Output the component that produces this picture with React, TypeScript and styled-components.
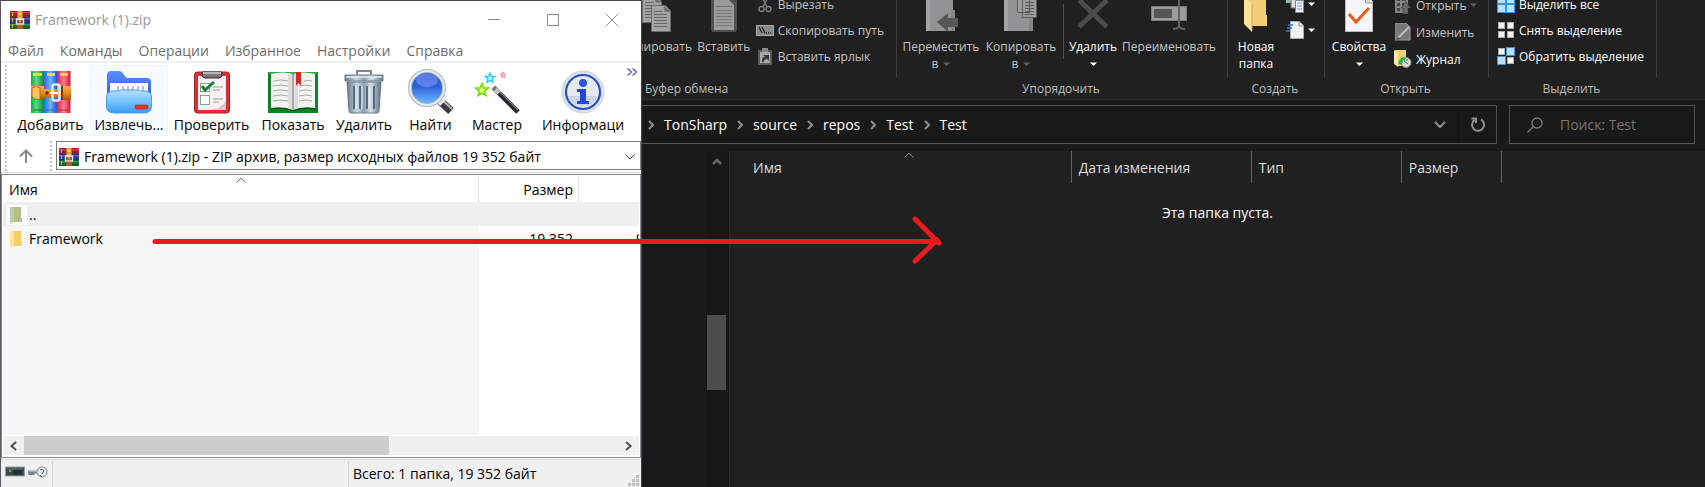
import React from "react";
import styled, { createGlobalStyle } from "styled-components";

const GlobalStyle = createGlobalStyle`
  * { box-sizing: border-box; }
  body { margin: 0; background: #191919; }
  button, input, select { font: inherit; color: inherit; }
  button { background: none; border: 0; padding: 0; cursor: default; }
  a { color: inherit; text-decoration: none; }
  svg { display: block; flex: none; }
`;

const Desktop = styled.div`
  position: relative;
  display: grid;
  grid-template-columns: minmax(0, 642fr) minmax(0, 1063fr);
  min-height: 100vh;
  overflow: hidden;
  font-family: "Open Sans", "Noto Sans", sans-serif;
  font-size: 14px;
  line-height: 20px;
  white-space: nowrap;
`;

/* ---------- Archiver window ---------- */

const Archiver = styled.main`
  display: flex;
  flex-direction: column;
  min-width: 0;
  background: #fff;
  color: #000;
  border-top: 1px solid #4b4654;
  border-left: 1px solid #5c5864;
  border-right: 1px solid #45464a;
`;
const TitleBar = styled.header`
  display: flex;
  align-items: center;
  height: 37px;
  padding-left: 9px;
  gap: 5px;
  color: #999;
`;
const Title = styled.h1`
  flex: 1;
  margin: 0;
  font-size: 14px;
  font-weight: 400;
`;
const CaptionButtons = styled.div`
  display: flex;
`;
const CaptionButton = styled.button`
  width: 59px;
  height: 36px;
  display: grid;
  place-items: center;
`;
const MenuBar = styled.nav`
  display: flex;
  height: 25px;
  padding: 3px 7px 0;
  gap: 16px;
  color: #6d6d6d;
  border-bottom: 2px solid #f0f0f0;
`;
const Toolbar = styled.div`
  position: relative;
  display: flex;
  height: 76px;
  padding: 2px 1px 0 4px;
  overflow: hidden;
`;
const Grip = styled.span`
  flex: none;
  width: 2px;
  margin-right: 4px;
  background: repeating-linear-gradient(#c3c3c3 0 2px, transparent 2px 4px);
`;
const ToolButton = styled.button<{ $width: number; $hot?: boolean }>`
  flex: 0 1 ${(p) => p.$width}px;
  height: 71px;
  display: flex;
  flex-direction: column;
  align-items: center;
  padding-top: 4px;
  gap: 1px;
  overflow: hidden;
  background: ${(p) => (p.$hot ? "#f7fbff" : "transparent")};
  box-shadow: ${(p) => (p.$hot ? "inset 0 0 0 1px #eef6fd" : "none")};
`;
const ToolIcon = styled.span`
  height: 45px;
  display: flex;
  align-items: flex-end;
`;
const MoreButton = styled.button`
  position: absolute;
  top: 2px;
  right: 1px;
  padding: 3px;
`;
const AddressRow = styled.div`
  display: flex;
  height: 34px;
  padding: 2px 0 1px 4px;
  border-bottom: 1px solid #d9d9d9;
`;
const UpButton = styled.button`
  width: 39px;
  display: grid;
  place-items: center;
  padding-right: 10px;
`;
const AddressBox = styled.label`
  flex: 1;
  min-width: 0;
  height: 29px;
  display: flex;
  align-items: center;
  padding: 2px 5px 0 2px;
  gap: 5px;
  border: 1px solid #7a7a7a;
`;
const AddressSelect = styled.select`
  flex: 1;
  min-width: 0;
  appearance: none;
  border: 0;
  padding: 0;
  background: transparent;
  outline: 0;
`;
const ListFrame = styled.section`
  flex: 1;
  display: flex;
  flex-direction: column;
  margin-top: 1px;
  padding: 0 1px 2px 1px;
  border: 1px solid #828790;
`;
const FileTable = styled.table`
  flex: 1;
  width: 100%;
  display: flex;
  flex-direction: column;
  thead, tbody { display: flex; flex-direction: column; }
  tbody { flex: 1; }
`;
const FileRow = styled.tr<{ $focused?: boolean; $fill?: boolean }>`
  display: grid;
  grid-template-columns: minmax(0, 1fr) 100px 60px;
  height: ${(p) => (p.$fill ? "auto" : "24px")};
  flex: ${(p) => (p.$fill ? 1 : "none")};
  background: ${(p) => (p.$focused ? "#efefef" : "transparent")};
  td:first-child { background: ${(p) => (p.$focused ? "transparent" : "#f7f7f7")}; }
`;
const HeaderRow = styled.tr`
  display: grid;
  grid-template-columns: minmax(0, 1fr) 100px 60px;
  height: 27px;
`;
const HeaderCell = styled.th<{ $right?: boolean; $open?: boolean }>`
  position: relative;
  margin-top: 1px;
  padding: 4px 5px 0 6px;
  font-weight: 400;
  text-align: ${(p) => (p.$right ? "right" : "left")};
  border-right: ${(p) => (p.$open ? "0" : "1px solid #e2e2e2")};
`;
const SortMark = styled.span<{ $shift?: boolean }>`
  position: absolute;
  top: 1px;
  left: 50%;
  margin-left: ${(p) => (p.$shift ? "-5px" : "4px")};
`;
const NameCell = styled.td`
  display: flex;
  align-items: center;
  padding: 1px 0 0;
`;
const FolderSlot = styled.span<{ $plain?: boolean }>`
  height: 20px;
  width: 20px;
  margin: 0 2px 0 4px;
  padding-left: 2px;
  background: ${(p) => (p.$plain ? "#fff" : "transparent")};
`;
const SizeCell = styled.td<{ $cut?: boolean }>`
  overflow: hidden;
  padding: ${(p) => (p.$cut ? "3px 0 0 57px" : "3px 6px 0 0")};
  text-align: ${(p) => (p.$cut ? "left" : "right")};
`;
const HScroll = styled.div`
  display: flex;
  height: 19px;
  margin-top: 1px;
  background: #f0f0f0;
`;
const HScrollButton = styled.button`
  width: 21px;
  display: grid;
  place-items: center;
`;
const HScrollTrack = styled.div`
  flex: 1;
  &::before {
    content: "";
    display: block;
    width: 61.5%;
    height: 100%;
    background: #cdcdcd;
  }
`;
const StatusBar = styled.footer`
  display: flex;
  height: 28px;
  margin-top: 1px;
  background: #f0f0f0;
  border-top: 1px solid #d7d7d7;
`;
const StatusPart = styled.div<{ $grow: number; $last?: boolean }>`
  flex: ${(p) => (p.$grow ? `${p.$grow} 1 0` : "none")};
  display: flex;
  align-items: center;
  justify-content: space-between;
  gap: 3px;
  margin-top: 1px;
  padding-left: 4px;
  padding-right: ${(p) => (p.$last ? "2px" : "4px")};
  border-right: ${(p) => (p.$last ? "0" : "1px solid #d4d4d4")};
`;
const StatusIcons = styled.span`
  display: flex;
  align-items: center;
  gap: 3px;
  padding-bottom: 5px;
`;
const ResizeGrip = styled.span`
  align-self: flex-end;
`;

/* ---------- Explorer window ---------- */

const Explorer = styled.section`
  display: flex;
  flex-direction: column;
  min-width: 0;
  overflow: hidden;
  background: #191919;
  color: #fff;
`;
const Ribbon = styled.div`
  display: flex;
  height: 100px;
  background: #202020;
  border-bottom: 1px solid #2b2b2b;
  font-size: 12px;
  line-height: 17px;
`;
const Group = styled.section<{ $width: number }>`
  flex: 0 1 ${(p) => p.$width}px;
  display: flex;
  flex-direction: column;
  overflow: hidden;
`;
const GroupBody = styled.div<{ $end?: boolean }>`
  height: 78px;
  display: flex;
  align-items: flex-end;
  justify-content: ${(p) => (p.$end ? "flex-end" : "flex-start")};
  padding-right: ${(p) => (p.$end ? "12px" : "0")};
  overflow: hidden;
  border-right: 1px solid #3d3d3d;
`;
const GroupLabel = styled.h2<{ $start?: boolean }>`
  margin: 0;
  padding: 2px 6px 0 3px;
  font-size: 12px;
  font-weight: 400;
  color: #bdbdbd;
  text-align: ${(p) => (p.$start ? "left" : "center")};
`;
const BigButton = styled.button<{ $width: number; $dim?: boolean }>`
  flex: none;
  width: ${(p) => p.$width}px;
  height: 86px;
  display: flex;
  flex-direction: column;
  align-items: center;
  color: ${(p) => (p.$dim ? "#c4c4c4" : "#fff")};
`;
const BigIcon = styled.span`
  height: 46px;
  display: flex;
  align-items: flex-end;
  padding-bottom: 6px;
`;
const SecondLine = styled.span`
  min-height: 17px;
  display: flex;
  align-items: center;
  gap: 5px;
`;
const SmallStack = styled.div<{ $pad: number; $loose?: boolean }>`
  flex: none;
  display: flex;
  flex-direction: column;
  gap: ${(p) => (p.$loose ? 7 : 6)}px;
  padding: 0 0 ${(p) => (p.$loose ? 9 : 12)}px ${(p) => p.$pad}px;
`;
const SmallButton = styled.button<{ $dim?: boolean }>`
  height: 20px;
  display: flex;
  align-items: center;
  gap: 4px;
  color: ${(p) => (p.$dim ? "#c4c4c4" : "#fff")};
`;
const SmallIcon = styled.span`
  width: 18px;
  display: grid;
  place-items: center;
`;
const StackGap = styled.span`
  height: 20px;
`;
const InnerRule = styled.span`
  width: 1px;
  height: 55px;
  margin: 0 4px 19px 6px;
  background: #505050;
`;
const NavRow = styled.div`
  display: flex;
  gap: 12px;
  height: 51px;
  padding: 5px 10px 7px 0;
`;
const PathBox = styled.nav`
  flex: 1;
  min-width: 0;
  display: flex;
  align-items: center;
  height: 39px;
  padding-left: 6px;
  border: 1px solid #535353;
  border-left: 0;
`;
const Crumb = styled.a`
  padding: 0 10px;
`;
const PathButton = styled.button<{ $rule?: boolean }>`
  width: 38px;
  height: 37px;
  display: grid;
  place-items: center;
  border-left: 1px solid ${(p) => (p.$rule ? "#141414" : "transparent")};
`;
const Spacer = styled.span`
  flex: 1;
`;
const SearchBox = styled.label`
  width: 186px;
  height: 39px;
  display: flex;
  align-items: center;
  gap: 17px;
  padding-left: 17px;
  border: 1px solid #535353;
`;
const SearchInput = styled.input`
  flex: 1;
  min-width: 0;
  padding: 0;
  border: 0;
  outline: 0;
  background: transparent;
  &::placeholder { color: #757575; opacity: 1; }
`;
const Content = styled.div`
  flex: 1;
  display: flex;
`;
const TreePane = styled.aside`
  width: 88px;
  display: flex;
  justify-content: flex-end;
  border-right: 1px solid #2b2b2b;
`;
const VScroll = styled.div`
  width: 23px;
  padding: 0 3px 0 1px;
  background: #171717;
  display: grid;
  grid-template-rows: 164fr 75fr 97fr;
`;
const VScrollButton = styled.button`
  display: grid;
  justify-items: center;
  align-content: start;
  padding-top: 7px;
`;
const VThumb = styled.span`
  background: #4d4d4d;
`;
const FolderView = styled.section`
  flex: 1;
  min-width: 0;
  background: #202020;
  color: #dedede;
`;
const Columns = styled.table`
  width: 100%;
  table-layout: fixed;
  border-collapse: collapse;
`;
const Column = styled.th<{ $width?: string; $first?: boolean; $open?: boolean }>`
  position: relative;
  width: ${(p) => p.$width ?? "auto"};
  height: 32px;
  padding: 2px 0 0 ${(p) => (p.$first ? "23px" : "7px")};
  text-align: left;
  font-weight: 400;
  border-right: ${(p) => (p.$open ? "0" : "1px solid #636363")};
`;
const EmptyNote = styled.p`
  margin: 20px 0 0;
  text-align: center;
  color: #fff;
`;

const ArrowOverlay = styled.svg`
  position: absolute;
  left: 0;
  top: 0;
  pointer-events: none;
`;

/* ---------- Drawings ---------- */

const Chevron = ({ d, w, h, color, stroke = 1 }: { d: string; w: number; h: number; color: string; stroke?: number }) => (
  <svg width={w} height={h} viewBox={`0 0 ${w} ${h}`} fill="none" stroke={color} strokeWidth={stroke}>
    <path d={d} />
  </svg>
);
const Up = ({ color }: { color: string }) => <Chevron d="M.7 5.5 5 1.2 9.3 5.5" w={10} h={7} color={color} />;
const Drop = ({ color }: { color: string }) => (
  <svg width="7" height="4" viewBox="0 0 7 4"><path d="M0 .5h7L3.5 4z" fill={color} /></svg>
);

const RarLogo = () => (
  <svg width="20" height="18" viewBox="0 0 20 18">
    <rect width="20" height="6" fill="#9c1838" /><rect y="1" width="20" height="1.4" fill="#d23a55" />
    <rect y="6" width="20" height="6" fill="#26348f" /><rect y="7" width="20" height="1.4" fill="#5368ce" />
    <rect y="12" width="20" height="6" fill="#17602c" /><rect y="13" width="20" height="1.4" fill="#33a04c" />
    <path d="M2.5 1v4M2.5 7v4M2.5 13v4" stroke="#e6c12a" />
    <path d="M7 0h6v18H7z" fill="#8a4a17" /><path d="M7.5 0h5v9h-5z" fill="#e8a12e" />
    <path d="M8.5 2a2 2 0 0 1 3 0v2h-3z" fill="#ffd75c" />
    <rect x="6.5" y="8" width="7" height="5" fill="none" stroke="#e8e8e8" strokeWidth="1.4" />
    <path d="M10 6.500v5" stroke="#fff" /><path d="M7 14h6v4H7z" fill="#b0601f" />
  </svg>
);

const AddIcon = () => (
  <svg width="42" height="44" viewBox="0 0 42 44">
    <defs>
      <linearGradient id="bg"><stop stopColor="#1ba545" /><stop offset=".4" stopColor="#58dd80" /><stop offset="1" stopColor="#108a34" /></linearGradient>
      <linearGradient id="bb"><stop stopColor="#1d6fe0" /><stop offset=".5" stopColor="#70b4ff" /><stop offset="1" stopColor="#1d58d8" /></linearGradient>
      <linearGradient id="br"><stop stopColor="#e5203c" /><stop offset=".5" stopColor="#ff7d92" /><stop offset="1" stopColor="#d41432" /></linearGradient>
      <linearGradient id="belt" x2="0" y2="1"><stop stopColor="#f7b04b" /><stop offset=".5" stopColor="#e88a1c" /><stop offset="1" stopColor="#a9540d" /></linearGradient>
    </defs>
    <path d="M1 1h13v42H1z" fill="url(#bg)" /><path d="M14 1h13v42H14z" fill="url(#bb)" /><path d="M27 1h13.500v42H27z" fill="url(#br)" />
    <path d="M3 4.500h9M17 4.500h8M30 4.500h8" stroke="#ffe03a" strokeWidth="2.500" />
    <path d="M3 40h9M16 40h9M29 40h9" stroke="#0003" strokeWidth="2" />
    <path d="M1 16h13v14H5q-4-2-4-7zM14 19h13v9H14zM27 16h14v14H27z" fill="url(#belt)" />
    <path d="M2 18q5-3 8 0v11q-5 2-8-2z" fill="#ffc35b" stroke="#b86a12" />
    <path d="M31 16h2v14h-2z" fill="#7d3b08" />
    <rect x="22.500" y="14.500" width="7" height="16" rx="2" fill="none" stroke="#e9e9ee" strokeWidth="2.500" />
    <path d="M20 23h8" stroke="#fff" strokeWidth="2" /><circle cx="17" cy="23" r="1.700" fill="#70360a" />
  </svg>
);
const ExtractIcon = () => (
  <svg width="46" height="44" viewBox="0 0 46 44">
    <defs>
      <linearGradient id="fb" x2="0" y2="1"><stop stopColor="#5a8dff" /><stop offset="1" stopColor="#2952dd" /></linearGradient>
      <linearGradient id="ff" x2="0" y2="1"><stop stopColor="#b4e0ff" /><stop offset=".5" stopColor="#77c2fc" /><stop offset="1" stopColor="#3c9bf4" /></linearGradient>
    </defs>
    <path d="M1 5q0-4 4-4h8q3 0 5 4l3 3h20q4 0 4 4v22H1z" fill="url(#fb)" />
    <path d="M4 13h38v15H4z" fill="#f8fafc" />
    <path d="M12 16v5M17 16v5M22 16v5M27 16v5M32 16v5M37 16v5" stroke="#b9c2cd" strokeWidth="2" />
    <path d="M.500 27q0-5 6-6h5q2 0 3-1h17q2 0 3 1h5q6 1 6 6v9q0 7-7 7h-31q-7 0-7-7z" fill="url(#ff)" stroke="#4d9dea" />
    <rect x="29" y="35" width="13" height="4" rx="1" fill="#e8321c" stroke="#ba2010" strokeWidth=".6" />
  </svg>
);
const TestIcon = () => (
  <svg width="36" height="44" viewBox="0 0 36 44">
    <rect x=".500" y="2" width="35" height="41" rx="3" fill="#d93136" stroke="#b01d22" />
    <path d="M4 6h28v26q-5 7-14 8H4z" fill="#f3f3f3" /><path d="M32 32q-3 6-14 8h14z" fill="#cfcfcf" />
    <path d="M8 2h20v4q-1 2-3 2H11q-2 0-3-2z" fill="#777" stroke="#4a2224" /><path d="M9 3h18" stroke="#d5d5d5" strokeWidth="1.500" />
    <rect x="6.500" y="13.500" width="9" height="8" fill="#fff" stroke="#999" /><rect x="6.500" y="25.500" width="9" height="9" fill="#fff" stroke="#999" />
    <path d="M8 16l3 4 9-8" fill="none" stroke="#168436" strokeWidth="3" />
    <path d="M19 17h10M19 20h7M19 29h10M19 32h6" stroke="#9c9c9c" />
  </svg>
);
const ViewIcon = () => (
  <svg width="50" height="44" viewBox="0 0 50 44">
    <path d="M0 2h50v41H0z" fill="#118126" /><path d="M1 3h48" stroke="#35a94a" strokeWidth="2" />
    <path d="M3 4q12-3 22 0 10-3 22 0v34q-13-2-22 2-9-4-22-2z" fill="#f3f3f0" />
    <path d="M24 4h2v36h-2z" fill="#aaa" /><path d="M20 4h4v35l-4-1zM26 4h4v34l-4 1z" fill="#dcdcda" />
    <path d="M5 11q8-2 15 0M5 16q8-2 15 0M5 21q8-2 15 0M5 26q8-2 15 0M5 31q8-2 15 0M31 16q7-2 13 0M31 21q7-2 13 0M31 26q7-2 13 0M31 31q7-2 13 0M36 11q4-1 8 0" fill="none" stroke="#a9a9a9" />
    <path d="M28 2h5v14l-2.500-3-2.500 3z" fill="#cf2c2c" /><path d="M3 39q13-2 22 2 9-4 22-2" stroke="#0b4915" fill="none" />
  </svg>
);
const TrashIcon = () => (
  <svg width="40" height="45" viewBox="0 0 40 45">
    <defs><linearGradient id="tr"><stop stopColor="#687988" /><stop offset=".3" stopColor="#cdd9e4" /><stop offset=".5" stopColor="#8b9cad" /><stop offset=".7" stopColor="#d5e0ea" /><stop offset="1" stopColor="#5d6e7f" /></linearGradient></defs>
    <path d="M13 6V2h14v4" fill="none" stroke="#7b8a99" strokeWidth="2" />
    <path d="M3 13h34l-2 29q0 2-3 2H8q-3 0-3-2z" fill="url(#tr)" stroke="#6a7a8a" />
    <path d="M10 17v23M16 17v23M23 17v23M30 17v23" stroke="#566b80" strokeWidth="2" /><path d="M12 17v23M18 17v23M25 17v23" stroke="#eaf1f6" />
    <path d="M1 6h38v6H1z" fill="url(#tr)" stroke="#71808f" /><path d="M2 8h36" stroke="#e5edf3" strokeWidth="1.500" />
  </svg>
);
const FindIcon = () => (
  <svg width="46" height="45" viewBox="0 0 46 45">
    <defs><linearGradient id="gl" x2="0" y2="1"><stop stopColor="#2749c9" /><stop offset=".45" stopColor="#3060dc" /><stop offset="1" stopColor="#6fc0ff" /></linearGradient></defs>
    <path d="M31 31l12 11" stroke="#3b3b44" strokeWidth="8" /><path d="M32 29l12 11" stroke="#b7b7c0" strokeWidth="2" /><path d="M30 29l5 5" stroke="#ededf0" strokeWidth="8" />
    <circle cx="19" cy="19" r="17" fill="url(#gl)" stroke="#a9b4c2" strokeWidth="4" /><circle cx="19" cy="19" r="17" fill="none" stroke="#e5ebf0" strokeWidth="2" />
    <ellipse cx="19" cy="11" rx="11" ry="7" fill="#9fbcff" opacity=".4" />
  </svg>
);
const starPath = "M0-7 2-2.300 7-2.200 3 1.200 4.300 6 0 3.500-4.300 6-3 1.200-7-2.200-2-2.300z";
const WizardIcon = () => (
  <svg width="46" height="44" viewBox="0 0 46 44">
    <path d={starPath} transform="translate(16 8) scale(.7)" fill="#b9f7ff" stroke="#2cc9ee" strokeWidth="2" />
    <path d={starPath} transform="translate(29 5) scale(.45)" fill="#ffc4c4" stroke="#f08d92" strokeWidth="2" />
    <path d={starPath} transform="translate(8 20) scale(.9)" fill="#e5ff90" stroke="#7ade12" strokeWidth="2" />
    <path d="M20 18l24 24" stroke="#27272b" strokeWidth="5" /><path d="M21 17l23 23" stroke="#76767c" strokeWidth="1.500" />
    <path d="M19 17l6 6" stroke="#c3c3c5" strokeWidth="5" /><path d="M19.500 17.500l2 2" stroke="#777" strokeWidth="5" />
  </svg>
);
const InfoIcon = () => (
  <svg width="44" height="44" viewBox="0 0 44 44">
    <circle cx="22" cy="22" r="21" fill="#dce1e7" stroke="#ccd1d8" /><circle cx="22" cy="22" r="17" fill="#e6eaf0" stroke="#2952c7" strokeWidth="2.200" />
    <path d="M7 26a16 16 0 0 0 30 0z" fill="#cad3df" />
    <circle cx="22" cy="13" r="4" fill="#2c59da" /><path d="M16 19h9v12h3v3H16v-3h3v-9h-3z" fill="#2449d2" />
  </svg>
);
const FolderMark = ({ muted }: { muted?: boolean }) => (
  <svg width="14" height="19" viewBox="0 0 14 19">
    <path d="M4 2h8v11h1v4H4z" fill={muted ? "#b4bf87" : "#f6cd68"} />
    <path d="M1 2h3l1 2v12l-2 3-2-2z" fill={muted ? "#bccbb0" : "#fde59b"} />
  </svg>
);
const DriveIcon = () => (
  <svg width="20" height="11" viewBox="0 0 20 11">
    <rect x=".500" y="1" width="19" height="9" fill="#3c464a" stroke="#8ea3ad" /><path d="M2 3h16" stroke="#65747a" />
    <circle cx="5" cy="5" r="1.300" fill="#55b81e" /><path d="M8 4h9v5H8z" fill="#293235" />
  </svg>
);
const KeyIcon = () => (
  <svg width="20" height="12" viewBox="0 0 20 12">
    <path d="M0 6h11M2 7v2M5 7v2" stroke="#7d8589" strokeWidth="3" /><path d="M1 5h10" stroke="#ccd3d6" />
    <circle cx="14" cy="6" r="5" fill="#eceff0" stroke="#9caab0" strokeWidth="1.500" /><path d="M12 4q3-2 4 1l-2 3M12 9l2 2" stroke="#465a66" fill="none" />
  </svg>
);
const Page = ({ x, y }: { x: number; y: number }) => (
  <g transform={`translate(${x} ${y})`}>
    <path d="M.500.500h14l5 5v21H.500z" fill="#a3a3a3" stroke="#6b6b6b" /><path d="M14 1v5h5" fill="#777" stroke="#5f5f5f" />
    <path d="M3 6.500h9M3 9.500h13M3 12.500h13M3 15.500h13M3 18.500h13M3 21.500h13" stroke="#666" />
  </g>
);
const CopyPages = () => <svg width="30" height="40" viewBox="0 0 30 40"><Page x={0} y={4} /><Page x={9} y={13} /></svg>;
const PasteBoard = () => (
  <svg width="26" height="40" viewBox="0 0 26 40"><rect y="4" width="26" height="36" rx="2" fill="#4f4f4f" /><path d="M3 8h15l5 5v25H3z" fill="#9b9b9b" />
    <path d="M5 14.500h16M5 18.500h16M5 21.500h16M5 24.500h16M5 27.500h16M5 30.500h16M5 33.500h16" stroke="#777" /></svg>
);
const MoveIcon = () => (
  <svg width="34" height="40" viewBox="0 0 34 40"><path d="M2 0h27v39H2z" fill="#939395" /><path d="M2 0h4v39H2z" fill="#a3a3a4" /><path d="M27 18h4v21h-4z" fill="#858587" />
    <path d="M13 30l11-9v5h10v9H24v5z" fill="#575757" /></svg>
);
const CopyToIcon = () => (
  <svg width="34" height="40" viewBox="0 0 34 40"><path d="M0 0h29v39H0z" fill="#939395" /><path d="M0 0h4v39H0z" fill="#a3a3a4" /><path d="M25 28l2-2 2 3v10h-4z" fill="#858587" />
    <g stroke="#5a5a5a" fill="#9c9c9c"><path d="M13.500.500h12v20h-12zM18.500 2.500h9l5 5v18h-14z" /><path d="M21 10.500h9M21 13.500h9M21 16.500h9M21 19.500h9M21 22.500h9" /></g></svg>
);
const CrossIcon = () => <svg width="30" height="40" viewBox="0 0 30 40"><path d="M1 8l28 27M29 8 1 35" stroke="#4b4b4b" strokeWidth="5" /></svg>;
const RenameIcon = () => (
  <svg width="36" height="40" viewBox="0 0 36 40"><rect x=".500" y="14.500" width="35" height="14" fill="#9c9c9c" stroke="#7b7b7b" /><path d="M3 17h18v9H3z" fill="#555" />
    <path d="M28 8v26M22 37q6 0 6-4 0 4 6 4" fill="none" stroke="#616161" strokeWidth="2" /></svg>
);
const NewFolderIcon = () => (
  <svg width="24" height="40" viewBox="0 0 24 40"><path d="M2 0h20v23h1v11H7z" fill="#f0cf77" /><path d="M0 4l8 8v28l-8-8z" fill="#fbe39c" /><path d="M8 12v27" stroke="#cda849" /></svg>
);
const PropertiesIcon = () => (
  <svg width="28" height="40" viewBox="0 0 28 40"><path d="M.500 2.500h20l7 7v30H.500z" fill="#f6f6f8" stroke="#bdbdc0" /><path d="M20.500 4v7h7" fill="#d8d8da" stroke="#999" /><path d="M4 22l7 8L24 16" fill="none" stroke="#ee5a18" strokeWidth="3" /></svg>
);
const Scissors = () => (
  <svg width="14" height="18" viewBox="0 0 14 18" fill="none" stroke="#7c7c7c" strokeWidth="1.500"><path d="M3 0l6 12M11 0 5 12" /><circle cx="3.500" cy="14" r="2.500" /><circle cx="10.500" cy="14" r="2.500" /></svg>
);
const CopyPathIcon = () => (
  <svg width="18" height="11" viewBox="0 0 18 11"><rect x=".500" y=".500" width="17" height="10" fill="#898989" stroke="#a5a5a5" /><path d="M3 2l3 6M6 2l3 6M10 8h1M12 8h1M14 8h1" stroke="#222" strokeWidth="1.300" /></svg>
);
const ShortcutIcon = () => (
  <svg width="14" height="17" viewBox="0 0 14 17"><path d="M0 2h14v15H0z" fill="#5a5a5a" /><path d="M2 4h10v11H2z" fill="#aaa" /><path d="M4 0h6v4H4z" fill="#888" /><path d="M4 14q-1-5 3-5L5 7h6v6l-2-2q-3 0-3 3z" fill="#3b3b3b" /></svg>
);
const NewItemIcon = () => (
  <svg width="18" height="18" viewBox="0 0 18 18"><path d="M0 1h9v7H0z" fill="#8fbdb8" /><path d="M5 4h8v9H5z" fill="#ddd" stroke="#777" /><path d="M9.500 5.500h8v12h-8z" fill="#eef4fb" stroke="#889" /><path d="M11 8h5M11 11h5M11 14h5" stroke="#6f9fdb" /></svg>
);
const QuickAccessIcon = () => (
  <svg width="18" height="18" viewBox="0 0 18 18"><path d="M4.500.500h9l4 4v13h-13z" fill="#f2f2f2" stroke="#aaa" /><path d="M13 1v4h4" fill="none" stroke="#888" /><path d="M2 4h5M1 7h5M0 10h4" stroke="#2478cf" strokeWidth="1.300" /></svg>
);
const OpenIcon = () => (
  <svg width="16" height="18" viewBox="0 0 16 18"><path d="M0 0h13v17H0z" fill="#858585" /><path d="M2 2h3v3H2zM7 2h4v3H7zM2 7h3v3H2zM7 7h3v3H7zM2 12h3v3H2z" fill="#454545" /><path d="M11 6l5 6h-3v6H8v-6H6z" fill="#696969" stroke="#333" strokeWidth=".500" /></svg>
);
const EditIcon = () => (
  <svg width="16" height="18" viewBox="0 0 16 18"><path d="M0 0h11l4 4v13H0z" fill="#777" stroke="#999" /><path d="M2 16 14 4" stroke="#c0c0c0" strokeWidth="2" /><path d="M1 17l4-1-2-2z" fill="#444" /></svg>
);
const HistoryIcon = () => (
  <svg width="18" height="18" viewBox="0 0 18 18"><path d="M1 0h11v16H3z" fill="#f3cf73" /><path d="M0 0l4 3v14l-4-3z" fill="#fde8a7" /><circle cx="12" cy="12.500" r="5" fill="#d7dcd9" stroke="#849089" /><path d="M4 14q1-7 8-7l-1 3q-3 0-3 5z" fill="#21b844" /><path d="M10 11l4 3M13 9v2" stroke="#55635a" /></svg>
);
const Tiles = ({ on }: { on: boolean[] }) => (
  <svg width="18" height="18" viewBox="0 0 18 18">
    {on.map((lit, i) => (
      <rect key={i} x={(i % 2) * 9 + (lit ? 0.5 : 1.5)} y={Math.floor(i / 2) * 9 + (lit ? 0.5 : 1.5)} width={lit ? 8 : 6} height={lit ? 8 : 6} fill={lit ? "#b9e0fc" : "#f4f4f4"} stroke={lit ? "#3195e6" : "#aeaeae"} />
    ))}
  </svg>
);

const tools = [
  { label: "Добавить", width: 79, icon: <AddIcon /> },
  { label: "Извлечь...", width: 78, icon: <ExtractIcon />, hot: true },
  { label: "Проверить", width: 87, icon: <TestIcon /> },
  { label: "Показать", width: 76, icon: <ViewIcon /> },
  { label: "Удалить", width: 66, icon: <TrashIcon /> },
  { label: "Найти", width: 67, icon: <FindIcon /> },
  { label: "Мастер", width: 66, icon: <WizardIcon /> },
  { label: "Информаци", width: 106, icon: <InfoIcon /> },
];
const menus = ["Файл", "Команды", "Операции", "Избранное", "Настройки", "Справка"];
const crumbs = ["TonSharp", "source", "repos", "Test", "Test"];
const archivePath = "Framework (1).zip - ZIP архив, размер исходных файлов 19 352 байт";

const ArchiverWindow = () => (
  <Archiver>
    <TitleBar>
      <RarLogo />
      <Title>Framework (1).zip</Title>
      <CaptionButtons>
        <CaptionButton aria-label="Свернуть"><Chevron d="M0 5.500h12" w={12} h={12} color="#8c8c8c" /></CaptionButton>
        <CaptionButton aria-label="Развернуть"><Chevron d="M.500.500h11v11H.500z" w={12} h={12} color="#8c8c8c" /></CaptionButton>
        <CaptionButton aria-label="Закрыть"><Chevron d="M0 0l12 12M12 0 0 12" w={12} h={12} color="#8c8c8c" /></CaptionButton>
      </CaptionButtons>
    </TitleBar>
    <MenuBar>{menus.map((m) => <button key={m}>{m}</button>)}</MenuBar>
    <Toolbar>
      <Grip />
      {tools.map((t) => (
        <ToolButton key={t.label} $width={t.width} $hot={t.hot}><ToolIcon>{t.icon}</ToolIcon><span>{t.label}</span></ToolButton>
      ))}
      <MoreButton aria-label="Ещё"><Chevron d="M.500.500l4 3.500-4 3.500M5.500.500l4 3.500-4 3.500" w={10} h={8} color="#5b5ba6" stroke={1.3} /></MoreButton>
    </Toolbar>
    <AddressRow>
      <Grip />
      <UpButton aria-label="Вверх"><Chevron d="M7 14V2M1 7.500l6-6 6 6" w={14} h={14} color="#8a8a8a" stroke={2} /></UpButton>
      <Grip />
      <AddressBox>
        <RarLogo />
        <AddressSelect aria-label="Путь"><option>{archivePath}</option></AddressSelect>
        <Chevron d="M.500.500 5 5 9.500.500" w={10} h={6} color="#444" />
      </AddressBox>
    </AddressRow>
    <ListFrame>
      <FileTable>
        <thead>
          <HeaderRow>
            <HeaderCell>Имя<SortMark $shift><Up color="#555" /></SortMark></HeaderCell>
            <HeaderCell $right>Размер</HeaderCell>
            <HeaderCell $open />
          </HeaderRow>
        </thead>
        <tbody>
          <FileRow $focused><NameCell><FolderSlot $plain><FolderMark muted /></FolderSlot>..</NameCell><td /><td /></FileRow>
          <FileRow><NameCell><FolderSlot><FolderMark /></FolderSlot>Framework</NameCell><SizeCell>19 352</SizeCell><SizeCell $cut>9</SizeCell></FileRow>
          <FileRow $fill aria-hidden><td /><td /><td /></FileRow>
        </tbody>
      </FileTable>
      <HScroll>
        <HScrollButton aria-label="Влево"><Chevron d="M6 1 1.500 5 6 9" w={7} h={10} color="#505050" stroke={2} /></HScrollButton>
        <HScrollTrack />
        <HScrollButton aria-label="Вправо"><Chevron d="M1 1l4.500 4L1 9" w={7} h={10} color="#505050" stroke={2} /></HScrollButton>
      </HScroll>
    </ListFrame>
    <StatusBar>
      <StatusPart $grow={0}><StatusIcons><DriveIcon /><KeyIcon /></StatusIcons></StatusPart>
      <StatusPart $grow={295} />
      <StatusPart $grow={294} $last>
        Всего: 1 папка, 19 352 байт
        <ResizeGrip><svg width="11" height="12" viewBox="0 0 11 12"><path d="M8 0h3v3H8zM4 4h3v3H4zM8 4h3v3H8zM0 8h3v3H0zM4 8h3v3H4zM8 8h3v3H8z" fill="#bfbfbf" /></svg></ResizeGrip>
      </StatusPart>
    </StatusBar>
  </Archiver>
);

const ExplorerWindow = () => (
  <Explorer>
    <Ribbon>
      <Group $width={255}>
        <GroupBody $end>
          <BigButton $width={74} $dim><BigIcon><CopyPages /></BigIcon>Копировать</BigButton>
          <BigButton $width={60} $dim><BigIcon><PasteBoard /></BigIcon>Вставить</BigButton>
          <SmallStack $pad={2}>
            <SmallButton $dim><SmallIcon><Scissors /></SmallIcon>Вырезать</SmallButton>
            <SmallButton $dim><SmallIcon><CopyPathIcon /></SmallIcon>Скопировать путь</SmallButton>
            <SmallButton $dim><SmallIcon><ShortcutIcon /></SmallIcon>Вставить ярлык</SmallButton>
          </SmallStack>
        </GroupBody>
        <GroupLabel $start>Буфер обмена</GroupLabel>
      </Group>
      <Group $width={331}>
        <GroupBody>
          <BigButton $width={88} $dim><BigIcon><MoveIcon /></BigIcon>Переместить<SecondLine>в <Drop color="#606060" /></SecondLine></BigButton>
          <BigButton $width={72} $dim><BigIcon><CopyToIcon /></BigIcon>Копировать<SecondLine>в <Drop color="#606060" /></SecondLine></BigButton>
          <InnerRule />
          <BigButton $width={50}><BigIcon><CrossIcon /></BigIcon>Удалить<SecondLine><Drop color="#fff" /></SecondLine></BigButton>
          <BigButton $width={102} $dim><BigIcon><RenameIcon /></BigIcon>Переименовать</BigButton>
        </GroupBody>
        <GroupLabel>Упорядочить</GroupLabel>
      </Group>
      <Group $width={97}>
        <GroupBody>
          <BigButton $width={56}><BigIcon><NewFolderIcon /></BigIcon>Новая<SecondLine>папка</SecondLine></BigButton>
          <SmallStack $pad={2}>
            <SmallButton aria-label="Создать элемент"><NewItemIcon /><Drop color="#fff" /></SmallButton>
            <SmallButton aria-label="Простой доступ"><QuickAccessIcon /><Drop color="#fff" /></SmallButton>
            <StackGap />
          </SmallStack>
        </GroupBody>
        <GroupLabel>Создать</GroupLabel>
      </Group>
      <Group $width={164}>
        <GroupBody>
          <BigButton $width={68}><BigIcon><PropertiesIcon /></BigIcon>Свойства<SecondLine><Drop color="#fff" /></SecondLine></BigButton>
          <SmallStack $pad={1} $loose>
            <SmallButton $dim><SmallIcon><OpenIcon /></SmallIcon>Открыть <Drop color="#606060" /></SmallButton>
            <SmallButton $dim><SmallIcon><EditIcon /></SmallIcon>Изменить</SmallButton>
            <SmallButton><SmallIcon><HistoryIcon /></SmallIcon>Журнал</SmallButton>
          </SmallStack>
        </GroupBody>
        <GroupLabel>Открыть</GroupLabel>
      </Group>
      <Group $width={168}>
        <GroupBody>
          <SmallStack $pad={8}>
            <SmallButton><Tiles on={[true, true, true, true]} />Выделить все</SmallButton>
            <SmallButton><Tiles on={[false, false, false, false]} />Снять выделение</SmallButton>
            <SmallButton><Tiles on={[false, true, true, false]} />Обратить выделение</SmallButton>
          </SmallStack>
        </GroupBody>
        <GroupLabel>Выделить</GroupLabel>
      </Group>
    </Ribbon>
    <NavRow>
      <PathBox aria-label="Путь к папке">
        {crumbs.map((c, i) => (
          <React.Fragment key={i}>
            <Chevron d="M1 1l4 4-4 4" w={6} h={10} color="#8f8f8f" stroke={2} />
            <Crumb href="#">{c}</Crumb>
          </React.Fragment>
        ))}
        <Spacer />
        <PathButton aria-label="Журнал адресов"><Chevron d="M1 1l5 5 5-5" w={12} h={8} color="#8f8f8f" stroke={2} /></PathButton>
        <PathButton aria-label="Обновить" $rule>
          <svg width="14" height="15" viewBox="0 0 14 15" fill="none" stroke="#8f8f8f" strokeWidth="2"><path d="M10 2.500a6 6 0 1 1-6.500.400" /><path d="M.500 1.500H5V6" /></svg>
        </PathButton>
      </PathBox>
      <SearchBox>
        <svg width="16" height="16" viewBox="0 0 16 16" fill="none" stroke="#7d7d7d" strokeWidth="1.300"><circle cx="10" cy="6" r="5" /><path d="M6.500 9.500.500 15.500" /></svg>
        <SearchInput aria-label="Поиск" placeholder="Поиск: Test" />
      </SearchBox>
    </NavRow>
    <Content>
      <TreePane>
        <VScroll>
          <VScrollButton aria-label="Вверх"><Chevron d="M1 6l4-4 4 4" w={10} h={8} color="#686868" stroke={2.5} /></VScrollButton>
          <VThumb />
        </VScroll>
      </TreePane>
      <FolderView>
        <Columns>
          <thead>
            <tr>
              <Column $width="35%" $first>Имя<SortMark><Up color="#9a9a9a" /></SortMark></Column>
              <Column $width="180px">Дата изменения</Column>
              <Column $width="150px">Тип</Column>
              <Column $width="100px">Размер</Column>
              <Column $open />
            </tr>
          </thead>
        </Columns>
        <EmptyNote>Эта папка пуста.</EmptyNote>
      </FolderView>
    </Content>
  </Explorer>
);

export default function App() {
  return (
    <>
      <GlobalStyle />
      <Desktop>
        <ArchiverWindow />
        <ExplorerWindow />
        <ArrowOverlay width="945" height="270" viewBox="0 0 945 270" fill="none" stroke="#e81a1c" strokeWidth="5" strokeLinecap="round" strokeLinejoin="round">
          <path d="M155 241.500h782M915 219l24 24M915 261l22-21" />
        </ArrowOverlay>
      </Desktop>
    </>
  );
}
